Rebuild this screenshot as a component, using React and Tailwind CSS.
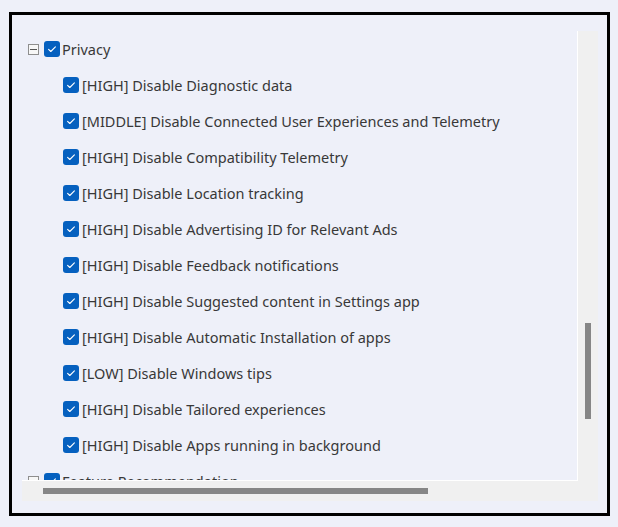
const items = [
  '[HIGH] Disable Diagnostic data',
  '[MIDDLE] Disable Connected User Experiences and Telemetry',
  '[HIGH] Disable Compatibility Telemetry',
  '[HIGH] Disable Location tracking',
  '[HIGH] Disable Advertising ID for Relevant Ads',
  '[HIGH] Disable Feedback notifications',
  '[HIGH] Disable Suggested content in Settings app',
  '[HIGH] Disable Automatic Installation of apps',
  '[LOW] Disable Windows tips',
  '[HIGH] Disable Tailored experiences',
  '[HIGH] Disable Apps running in background',
];

function Check() {
  return (
    <span className="flex h-4 w-4 shrink-0 items-center justify-center rounded-[3px] bg-[#0560bf]">
      <svg width="16" height="16" viewBox="0 0 16 16" fill="none">
        <path d="M4.6 8.3l2.2 2.2 4.6-4.6" stroke="#fff" strokeWidth="1.1" strokeLinecap="round" strokeLinejoin="round" />
      </svg>
    </span>
  );
}

function Expander() {
  return (
    <span className="flex h-[11px] w-[11px] shrink-0 items-center justify-center border border-[#8e8e8e] bg-[#f7f7f7]">
      <span className="h-px w-[7px] bg-[#555]" />
    </span>
  );
}

export default function App() {
  return (
    <div className="h-[527px] w-[618px] bg-[#eef0f9] pl-[9px] pt-[12px] font-['Segoe_UI','Noto_Sans',sans-serif] text-[14.5px] text-[#383838]">
      <div className="h-[504px] w-[601px] border-[3px] border-black pl-[10px] pt-[16px]">
        <div className="grid w-[576px] grid-cols-[556px_20px] grid-rows-[450px_20px] bg-[#f0f0f0]">
          {/* tree content */}
          <div className="overflow-hidden border-b border-r border-white bg-[#eef0f9]">
            <div className="flex h-9 items-center pl-[6px]">
              <Expander />
              <span className="ml-[5px]"><Check /></span>
              <span className="ml-[2px] leading-none">Privacy</span>
            </div>
            {items.map((t) => (
              <div key={t} className="flex h-9 items-center pl-[41px] whitespace-nowrap">
                <Check />
                <span className="ml-[3px] leading-none">{t}</span>
              </div>
            ))}
            <div className="flex h-9 items-center pl-[6px] whitespace-nowrap">
              <Expander />
              <span className="ml-[5px]"><Check /></span>
              <span className="ml-[2px] leading-none">Feature Recommendation</span>
            </div>
          </div>
          {/* vertical scrollbar */}
          <div className="row-span-2 pl-[7px] pt-[292px]">
            <div className="h-[96px] w-[6px] bg-[#868686]" />
          </div>
          {/* horizontal scrollbar */}
          <div className="pl-[21px] pt-[7px]">
            <div className="h-[6px] w-[385px] bg-[#868686]" />
          </div>
        </div>
      </div>
    </div>
  );
}
